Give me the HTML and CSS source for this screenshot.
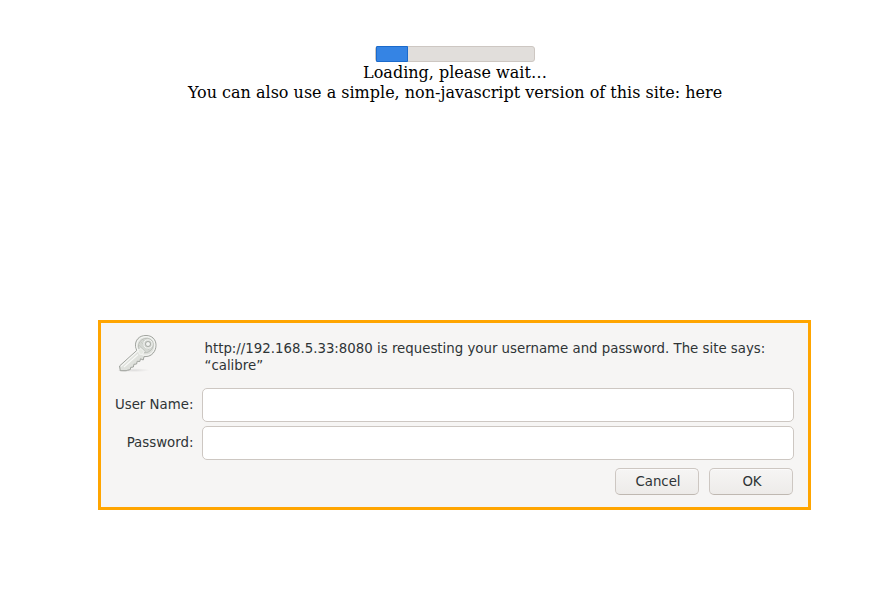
FILE: index.html
```html
<!DOCTYPE html>
<html lang="en">
<head>
<meta charset="utf-8">
<title>calibre</title>
<link rel="stylesheet" href="styles.css">
</head>
<body>
<main class="loading">
  <div class="progress" role="progressbar"><div class="progress-value"></div></div>
  <div class="line">Loading, please wait…</div>
  <div class="line">You can also use a simple, non-javascript version of this site: <a class="link">here</a></div>
</main>
<form class="dialog">
  <div class="message-row">
    <svg class="key" viewBox="0 0 48 44" width="48" height="44" aria-hidden="true">
      <defs>
        <linearGradient id="metal" x1="0" y1="0" x2="1" y2="1">
          <stop offset="0" stop-color="#e6e8e4"/>
          <stop offset="1" stop-color="#dadcd7"/>
        </linearGradient>
        <radialGradient id="shade">
          <stop offset="0" stop-color="#666" stop-opacity=".5"/>
          <stop offset="1" stop-color="#777" stop-opacity="0"/>
        </radialGradient>
      </defs>
      <ellipse cx="20" cy="40.200" rx="16" ry="2" fill="url(#shade)" opacity=".35"/>
      <ellipse cx="10" cy="40.500" rx="6" ry="1.300" fill="url(#shade)"/>
      <path d="M22.700 20.500 21.500 16.500C21 10 25 5.500 32 5.500c6 0 10 3.800 10 9.700 0 6.300-4.300 11.300-10 11.300l-2 .2-.8 3.300-2.700-1.200-.7 2.700-2.600-.2-.6 2.700-2.700.3-.5 2.700-2.700.4-.4 2.200-2.800.6-1.300.5H6.300L5.500 36z" fill="url(#metal)" stroke="#a0a39e" stroke-width="1" stroke-linejoin="round"/>
      <path d="M23.800 20.800 22.700 16.500c-.2-5.700 3.300-9.800 9.300-9.800 5.300 0 8.800 3.300 8.800 8.500 0 5.600-3.800 10-8.800 10l-3.500-.2" fill="none" stroke="#fafbf9" stroke-width="1"/>
      <path d="M7 36.300 23.800 20.800M10 37l14-12.500" fill="none" stroke="#f8f9f7" stroke-width="1.100"/>
      <ellipse cx="31.800" cy="15.500" rx="7.700" ry="7" fill="#d4d7d2" stroke="#b9bcb6" stroke-width=".8" transform="rotate(-35 31.800 15.500)"/>
      <path d="m25 15 8 8m-6-11 9 9m-7-11 8 8" stroke="#c3c7c1" stroke-width=".7"/>
      <path d="m24 20 3-1.500 3 3-1.500 3-3-.3z" fill="#e5e8e2" stroke="#f7f8f6" stroke-width=".8"/>
      <circle cx="34" cy="14" r="4.100" fill="#d0d3ce" stroke="#f5f6f4" stroke-width="1"/>
      <circle cx="34" cy="14" r="2.500" fill="#f2f3f1" stroke="#a6aaa4" stroke-width="1"/>
    </svg>
    <div class="message">http://192.168.5.33:8080 is requesting your username and password. The site says: “calibre”</div>
  </div>
  <div class="fields">
    <label for="user">User Name:</label><input id="user" type="text">
    <label for="pass">Password:</label><input id="pass" type="password">
  </div>
  <div class="actions">
    <button type="button">Cancel</button>
    <button type="button">OK</button>
  </div>
</form>
</body>
</html>
```
FILE: styles.css
```css
* {
  box-sizing: border-box;
}

body {
  margin: 0;
  background: #fff;
}

.loading {
  display: flex;
  flex-direction: column;
  align-items: center;
  width: 910px;
  height: 320px;
  padding-top: 46px;
  font: 16px/20px "DejaVu Serif", serif;
  color: #000;
}

.progress {
  width: 160px;
  height: 16px;
  margin-bottom: 1px;
  border: 1px solid #cdc7c2;
  border-radius: 3px;
  background: #e1dedb;
}

.progress-value {
  width: 32px;
  height: 16px;
  margin: -1px 0;
  border: 1px solid #1b6acb;
  border-radius: 1px 0 0 1px;
  background: #3584e4;
}

.line {
  white-space: nowrap;
}

.dialog {
  width: 713px;
  height: 190px;
  margin-left: 98px;
  padding: 5px 14px 0 11px;
  border: 3px solid #ffa500;
  background: #f6f5f4;
  font: 13.333px/17px "DejaVu Sans", sans-serif;
  color: #2e3436;
}

.message-row {
  display: flex;
  height: 60px;
}

.key {
  flex: none;
  margin: 2px 0 0 2px;
}

.message {
  width: 580px;
  margin-left: 42.500px;
  padding-top: 12px;
}

.fields {
  display: grid;
  grid-template-columns: 82px 592px;
  gap: 4px 8px;
  align-items: center;
}

.fields label {
  text-align: right;
  white-space: nowrap;
  padding: 0 0.600px 1px 0;
}

.fields input {
  width: 592px;
  height: 34px;
  padding: 0 8px;
  border: 1px solid #cdc7c2;
  border-radius: 5px;
  background: #fff;
  font: inherit;
  outline: none;
}

.actions {
  display: flex;
  justify-content: flex-end;
  gap: 10px;
  padding: 8px 1px 0 0;
}

.actions button {
  width: 84px;
  height: 27px;
  padding: 0 0 1px 2px;
  border: 1px solid #cdc7c2;
  border-bottom-color: #bfb8b1;
  border-radius: 5px;
  background: linear-gradient(#f6f5f4, #edebe9);
  box-shadow: inset 0 1px #fbfafa;
  font: inherit;
  color: inherit;
}
```
